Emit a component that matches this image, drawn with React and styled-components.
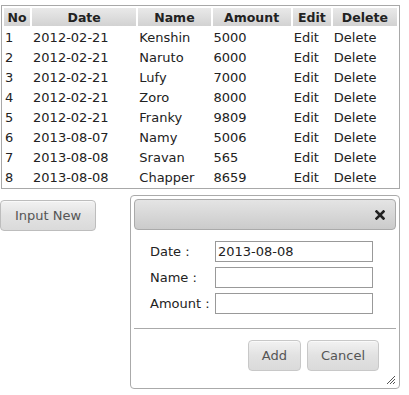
import React from "react";
import styled, { createGlobalStyle } from "styled-components";

const Global = createGlobalStyle`
  html, body { margin: 0; padding: 0; background: #fff; }
  body { font-family: "DejaVu Sans", Verdana, sans-serif; font-size: 13px; color: #222; }
`;

const Page = styled.div`
  padding: 5px 0 0 1px;
  width: 408px;
`;

const Table = styled.table`
  table-layout: fixed;
  border-collapse: separate;
  border-spacing: 2px;
  border: 1px solid #a8a8a8;
  width: 399px;
  font-size: 13px;
`;

const Th = styled.th`
  height: 18px;
  padding: 1px 0 0 0;
  box-sizing: border-box;
  font-size: 12.5px;
  font-weight: bold;
  color: #222;
  text-align: center;
  background: linear-gradient(#e9e9e9, #d2d2d2);
  line-height: 17px;
`;

const Td = styled.td`
  height: 18px;
  box-sizing: border-box;
  padding: 1px 0 0 1px;
  line-height: 17px;
  white-space: nowrap;
  overflow: hidden;
`;

const Lower = styled.div`
  display: flex;
  align-items: flex-start;
  margin-top: 6px;
  margin-left: -1px;
`;

const Button = styled.button`
  font-family: "DejaVu Sans", Verdana, sans-serif;
  font-size: 13px;
  color: #555;
  height: 31px;
  padding: 0 ${(p) => p.$px || 13}px;
  border: 1px solid #c8c8c8;
  border-radius: 4px;
  background: linear-gradient(#f2f2f2, #e2e2e2 50%, #dadada);
  box-shadow: inset 0 1px 0 rgba(255,255,255,0.6);
  cursor: pointer;
`;

const InputNew = styled(Button)`
  margin-top: 5px;
  width: 96px;
  border-color: #bdbdbd;
`;

const Dialog = styled.div`
  margin-left: 34px;
  width: 262px;
  height: 186px;
  padding: 3px;
  border: 1px solid #aaa;
  border-radius: 4px;
  background: #fff;
  position: relative;
  display: flex;
  flex-direction: column;
`;

const TitleBar = styled.div`
  height: 29px;
  border: 1px solid #aaa;
  border-radius: 4px;
  background: linear-gradient(#e4e4e4, #cbcbcb);
  display: flex;
  align-items: center;
  justify-content: flex-end;
  padding-right: 10px;
`;

const Close = styled.span`
  display: flex;
  width: 10px;
  height: 10px;
`;

const Form = styled.div`
  display: grid;
  grid-template-columns: 65px 158px;
  row-gap: 5px;
  padding: 11px 0 0 16px;
  align-items: center;
`;

const Label = styled.label`
  font-size: 13px;
  color: #222;
`;

const Input = styled.input`
  box-sizing: border-box;
  width: 158px;
  height: 21px;
  border: 1px solid #999;
  padding: 0 2px;
  font-family: "DejaVu Sans", Verdana, sans-serif;
  font-size: 13px;
  color: #222;
  outline: none;
`;

const ButtonPane = styled.div`
  margin-top: 14px;
  border-top: 1px solid #aaa;
  display: flex;
  justify-content: flex-end;
  gap: 6px;
  padding: 11px 17px 0 0;
`;

const Resize = styled.span`
  position: absolute;
  right: 3px;
  bottom: 3px;
  width: 10px;
  height: 10px;
  display: flex;
`;

const rows = [
  [1, "2012-02-21", "Kenshin", 5000],
  [2, "2012-02-21", "Naruto", 6000],
  [3, "2012-02-21", "Lufy", 7000],
  [4, "2012-02-21", "Zoro", 8000],
  [5, "2012-02-21", "Franky", 9809],
  [6, "2013-08-07", "Namy", 5006],
  [7, "2013-08-08", "Sravan", 565],
  [8, "2013-08-08", "Chapper", 8659],
];

export default function App() {
  return (
    <Page>
      <Global />
      <Table>
        <colgroup>
          <col style={{ width: 26 }} />
          <col style={{ width: 104 }} />
          <col style={{ width: 72 }} />
          <col style={{ width: 78 }} />
          <col style={{ width: 38 }} />
          <col style={{ width: 64 }} />
        </colgroup>
        <thead>
          <tr>
            <Th>No</Th>
            <Th>Date</Th>
            <Th>Name</Th>
            <Th>Amount</Th>
            <Th>Edit</Th>
            <Th>Delete</Th>
          </tr>
        </thead>
        <tbody>
          {rows.map((r) => (
            <tr key={r[0]}>
              <Td>{r[0]}</Td>
              <Td>{r[1]}</Td>
              <Td>{r[2]}</Td>
              <Td>{r[3]}</Td>
              <Td>Edit</Td>
              <Td>Delete</Td>
            </tr>
          ))}
        </tbody>
      </Table>
      <Lower>
        <InputNew>Input New</InputNew>
        <Dialog>
          <TitleBar>
            <Close>
              <svg width="10" height="10" viewBox="0 0 10 10">
                <path d="M1.5 1.5 L8.5 8.5 M8.5 1.5 L1.5 8.5" stroke="#222" strokeWidth="2.6" strokeLinecap="square" />
              </svg>
            </Close>
          </TitleBar>
          <Form>
            <Label>Date :</Label>
            <Input defaultValue="2013-08-08" />
            <Label>Name :</Label>
            <Input />
            <Label>Amount :</Label>
            <Input />
          </Form>
          <ButtonPane>
            <Button $px={13}>Add</Button>
            <Button $px={13}>Cancel</Button>
          </ButtonPane>
          <Resize>
            <svg width="10" height="10" viewBox="0 0 10 10">
              <path d="M9 1 L1 9 M9 4 L4 9 M9 7 L7 9" stroke="#555" strokeWidth="1" />
            </svg>
          </Resize>
        </Dialog>
      </Lower>
    </Page>
  );
}
